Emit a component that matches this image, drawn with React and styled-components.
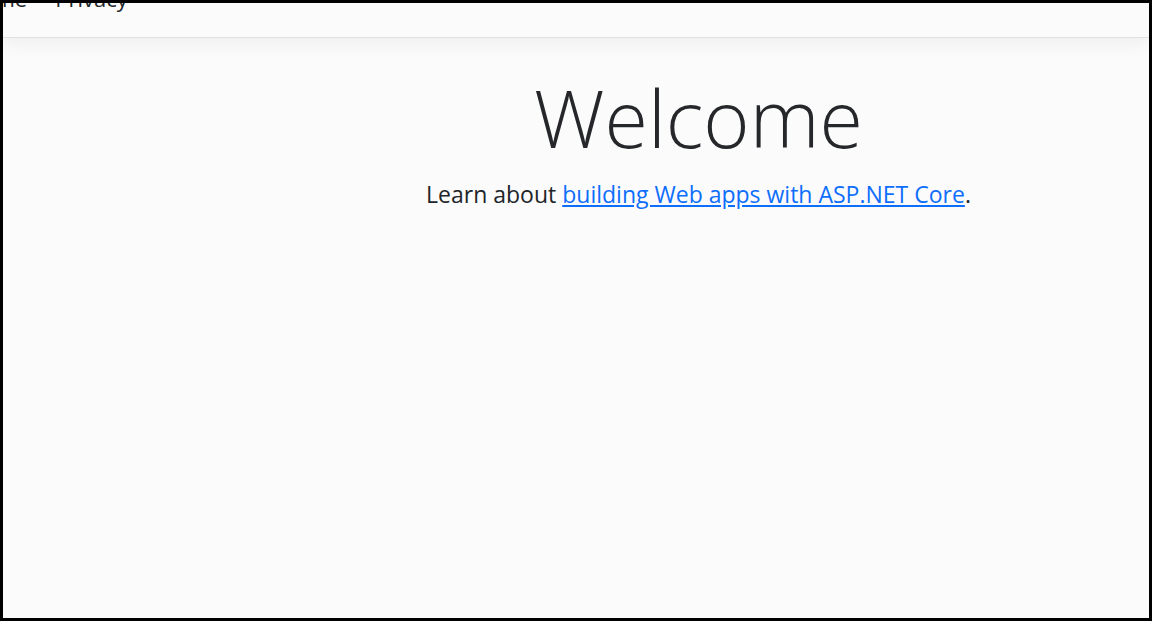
import React from "react";
import styled, { createGlobalStyle } from "styled-components";

const GlobalStyle = createGlobalStyle`
  html, body {
    margin: 0;
    padding: 0;
    background: #000;
  }
  body {
    font-family: "Open Sans", "Noto Sans", "Liberation Sans", sans-serif;
    color: #212529;
  }
`;

const Frame = styled.div`
  width: 1152px;
  height: 621px;
  box-sizing: border-box;
  border: 3px solid #000;
  background: #fbfbfb;
  overflow: hidden;
  display: flex;
  flex-direction: column;
`;

const Header = styled.header`
  height: 34px;
  flex: none;
  background: #fbfbfb;
  border-bottom: 1px solid #e0e0e0;
  box-shadow: 0 6px 18px rgba(0, 0, 0, 0.05);
  position: relative;
  z-index: 1;
  overflow: hidden;
`;

const Nav = styled.nav`
  display: flex;
  gap: 28px;
  margin-top: -22px;
  margin-left: -38px;
  font-size: 22px;
  line-height: 34px;
`;

const NavLink = styled.a`
  color: #212529;
  text-decoration: none;
`;

const Main = styled.main`
  flex: 1;
  padding-left: 245px;
  padding-top: 33px;
  text-align: center;
`;

const Title = styled.h1`
  margin: 0;
  font-size: 79px;
  font-weight: 300;
  line-height: 1.2;
  color: #25272b;
`;

const Lead = styled.p`
  margin: 11px 0 0;
  font-size: 23px;
  line-height: 34px;
  color: #212529;
`;

const Link = styled.a`
  color: #0d6efd;
  text-decoration: underline;
`;

export default function App() {
  return (
    <>
      <GlobalStyle />
      <Frame>
        <Header>
          <Nav>
            <NavLink href="#">Home</NavLink>
            <NavLink href="#">Privacy</NavLink>
          </Nav>
        </Header>
        <Main>
          <Title>Welcome</Title>
          <Lead>
            Learn about{" "}
            <Link href="#">building Web apps with ASP.NET Core</Link>.
          </Lead>
        </Main>
      </Frame>
    </>
  );
}
